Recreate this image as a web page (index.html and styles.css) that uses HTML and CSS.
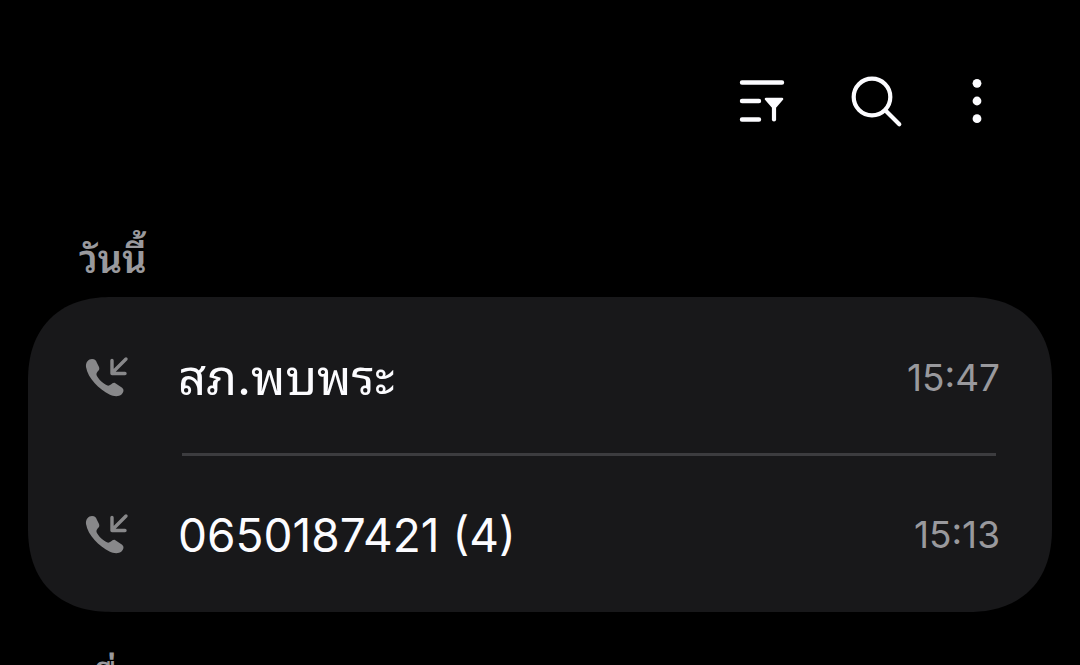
FILE: index.html
```html
<!DOCTYPE html>
<html lang="th">

<head>
    <meta charset="UTF-8">
    <meta name="viewport" content="width=device-width, initial-scale=1.0">
    <title>ประวัติการโทร</title>
    <link rel="stylesheet" href="styles.css">
</head>

<body>
    <header class="toolbar">
        <button type="button" aria-label="ตัวกรอง">
            <svg width="52" height="56" viewBox="0 0 52 56">
                <path d="M6 9.500h40M6 28h17M6 46.500h17" fill="none" stroke="currentColor" stroke-width="4.400" stroke-linecap="round"/>
                <path d="M30 26h16l-6.500 7.500h-3z" fill="currentColor" stroke="currentColor" stroke-width="2.600" stroke-linejoin="round"/>
                <path d="M38 33v13.500" fill="none" stroke="currentColor" stroke-width="4.200" stroke-linecap="round"/>
            </svg>
        </button>
        <button type="button" aria-label="ค้นหา">
            <svg width="56" height="56" viewBox="0 0 56 56">
                <circle cx="24" cy="24" r="18.300" fill="none" stroke="currentColor" stroke-width="4.200"/>
                <path d="M37.500 37.500L51.300 51.300" fill="none" stroke="currentColor" stroke-width="4.200" stroke-linecap="round"/>
            </svg>
        </button>
        <button type="button" aria-label="ตัวเลือกเพิ่มเติม">
            <svg width="20" height="56" viewBox="0 0 20 56">
                <g fill="currentColor">
                    <circle cx="10" cy="10.300" r="4.400"/>
                    <circle cx="10" cy="28" r="4.400"/>
                    <circle cx="10" cy="45.700" r="4.400"/>
                </g>
            </svg>
        </button>
    </header>

    <main>
        <h2>วันนี้</h2>
        <ul class="calls">
            <li>
                <svg class="incoming" width="48" height="48" viewBox="0 0 48 48" aria-hidden="true">
                    <path d="M3 13C2.500 8 5.500 5 9 5c3 0 4 1.500 5 4l2 4c1.500 4-3 4-2.500 8 1.500 4 7 9 11 10.500 3.500 1 4-3.500 7.500-2.500l6 4c3.500 2 3 5 .500 7.500-3 2.500-8 2-12 0C16 35 5 24.500 3 13z" fill="currentColor"/>
                    <path d="M43 5L29 19M29 6.500v13h13" fill="none" stroke="currentColor" stroke-width="3.400" stroke-linecap="round" stroke-linejoin="round"/>
                </svg>
                <span class="name">สภ.พบพระ</span>
                <time>15:47</time>
            </li>
            <li>
                <svg class="incoming" width="48" height="48" viewBox="0 0 48 48" aria-hidden="true">
                    <path d="M3 13C2.500 8 5.500 5 9 5c3 0 4 1.500 5 4l2 4c1.500 4-3 4-2.500 8 1.500 4 7 9 11 10.500 3.500 1 4-3.500 7.500-2.500l6 4c3.500 2 3 5 .500 7.500-3 2.500-8 2-12 0C16 35 5 24.500 3 13z" fill="currentColor"/>
                    <path d="M43 5L29 19M29 6.500v13h13" fill="none" stroke="currentColor" stroke-width="3.400" stroke-linecap="round" stroke-linejoin="round"/>
                </svg>
                <span class="name number">0650187421 (4)</span>
                <time>15:13</time>
            </li>
        </ul>
        <h2>เมื่อวาน</h2>
    </main>
</body>

</html>
```

FILE: styles.css
```css
body {
    margin: 0;
    background: #000;
    color: #fcfcff;
    font-family: Inter, "Noto Sans Thai Looped", Loma, Waree, Garuda, "Noto Sans", sans-serif;
    height: 100vh;
    overflow: hidden;
}

.toolbar {
    display: flex;
    justify-content: flex-end;
    gap: 60px;
    padding: 73px 93px 0 0;
}

.toolbar button {
    display: block;
    padding: 0;
    border: none;
    background: none;
    color: inherit;
    cursor: pointer;
}

.toolbar button:last-child {
    margin-left: 3px;
}

svg {
    display: block;
}

main {
    padding: 102px 28px 0;
}

h2 {
    margin: 0 0 10px 51px;
    color: #99999d;
    font-size: 38px;
    font-weight: 600;
    line-height: 56px;
}

.calls {
    margin: 0 0 40px;
    padding: 0 52px;
    list-style: none;
    background: #18181a;
    border-radius: 84px;
    corner-shape: superellipse(1.2);
}

.calls li {
    display: grid;
    grid-template-columns: 98px 1fr auto;
    align-items: center;
    height: 150px;
    padding-top: 6px;
}

.calls li + li::before {
    content: "";
    grid-column: 2 / -1;
    height: 3px;
    margin: 0 4px;
    background: #3c3c3f;
}

.calls li + li {
    grid-template-rows: 3px 158px;
    height: 159px;
    padding-top: 0;
}

.incoming {
    grid-column: 1;
    margin-left: 3px;
    color: #88888a;
}

.name {
    font-size: 49px;
    line-height: 64px;
}

.number {
    font-size: 46px;
}

time {
    color: #99999d;
    font-size: 37px;
    line-height: 48px;
}
```
